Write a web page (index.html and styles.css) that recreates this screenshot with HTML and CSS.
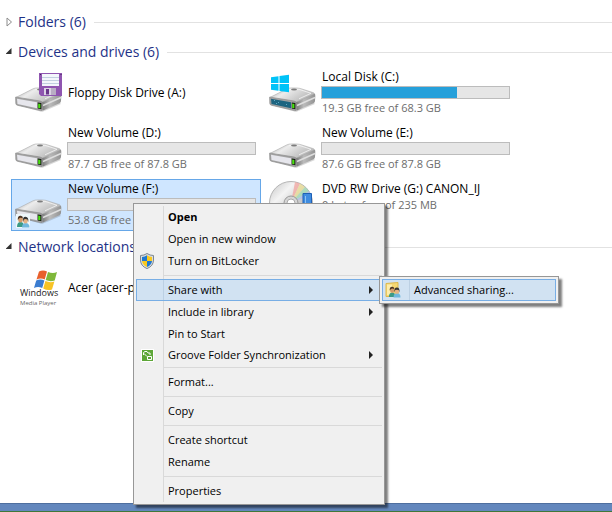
FILE: index.html
```html
<!DOCTYPE html>
<html lang="en">
<head>
  <meta charset="UTF-8">
  <meta name="viewport" content="width=device-width, initial-scale=1">
  <title>Computer</title>
  <link rel="stylesheet" href="styles.css">
</head>
<body>

<!-- shared icon shapes -->
<svg class="defs" aria-hidden="true">
  <defs>
    <linearGradient id="top" x1="0" y1="0" x2="1" y2="0.5">
      <stop offset="0" stop-color="#a2a2a2"/>
      <stop offset="0.4" stop-color="#ececec"/>
      <stop offset="0.65" stop-color="#d6d6d6"/>
      <stop offset="1" stop-color="#b8b8b8"/>
    </linearGradient>
    <linearGradient id="side" x1="0" y1="0" x2="1" y2="0">
      <stop offset="0" stop-color="#777"/>
      <stop offset="0.4" stop-color="#bbb"/>
      <stop offset="1" stop-color="#929292"/>
    </linearGradient>
    <linearGradient id="disc" x1="0" y1="0" x2="1" y2="1">
      <stop offset="0" stop-color="#c2c2c2"/>
      <stop offset="0.3" stop-color="#f4f4f4"/>
      <stop offset="0.6" stop-color="#c8c8c8"/>
      <stop offset="1" stop-color="#eee"/>
    </linearGradient>
    <symbol id="drive" viewBox="0 0 48 48">
      <path d="M2 36 L27 43 L46 35 L44 33 L4 34z" fill="#000" opacity="0.15"/>
      <path d="M27 32.500 L45.500 24.500 Q46.500 25 46.300 27 L46 32 Q46 33.500 44.500 34.200 L27.500 41.700z" fill="url(#side)"/>
      <path d="M28 36.500 L46 28.500" stroke="#dedede" stroke-width="1.500" fill="none"/>
      <path d="M0.800 28.500 L18 19.800 Q20 18.800 23 18.900 L28 19 Q30 19 33 20 L44.500 23.700 Q46 24.300 44.500 25.200 L29 32.400 Q27 33.200 25 32.900 L3 30z" fill="url(#top)" stroke="#a0a0a0" stroke-width="0.500"/>
      <path d="M20 20.500 L30 20.300 L42 24.300 L30 29.800" stroke="#f5f5f5" stroke-width="0.800" fill="none"/>
      <ellipse cx="25" cy="20.500" rx="3" ry="1" fill="#7c7c7c"/>
      <path d="M0.600 28.200 Q1.500 28 3 28.400 L25 32 Q27.500 32.500 27.500 34.500 L27.500 40 Q27.500 42 25.500 41.600 L2.500 36.300 Q1 36 0.800 34.500z" fill="#a2a2a2" stroke="#858585" stroke-width="0.600"/>
      <path class="panel" d="M2 29.700 L22 33.300 L22 39.300 L2.500 34.900z"/>
      <path d="M22.800 33.400 L26.400 34 L26.400 40.300 L22.800 39.500z" fill="#151515"/>
      <path d="M23.200 34.600 L25.400 35 L25.400 39.300 L23.200 38.900z" fill="#4ae010"/>
    </symbol>
    <symbol id="people" viewBox="0 0 14 14">
      <path d="M1 13 Q1 8 4.500 8 Q8 8 8 13z" fill="#3c9a86"/>
      <path d="M6 13.500 Q6 9 9.500 9 Q13.500 9 13.500 13.500z" fill="#6fb7dd"/>
      <ellipse cx="4.500" cy="5.500" rx="2.300" ry="3" fill="#d39c6b"/>
      <path d="M1.800 6 Q1.500 1.500 4.800 1.800 Q7 2 6.900 4.500 Q4.500 3.200 3 4.500z" fill="#4d3524"/>
      <ellipse cx="9.500" cy="6.500" rx="2.300" ry="3" fill="#e5b283"/>
      <path d="M7 8 Q6.300 2.800 9.500 2.800 Q13 3 12.200 8 L11.500 5.500 Q9.500 4.500 7.800 5.500z" fill="#333"/>
    </symbol>
  </defs>
</svg>

<main class="explorer">
  <section>
    <h2 class="group-title">
      <button class="toggle" aria-label="Expand folders">
        <svg width="7" height="10" viewBox="0 0 7 10"><path d="M1 1 L5.500 5 L1 9z" fill="#fff" stroke="#8c8c8c"/></svg>
      </button>
      <span>Folders (6)</span>
    </h2>
  </section>

  <section>
    <h2 class="group-title">
      <button class="toggle" aria-label="Collapse devices and drives">
        <svg width="7" height="10" viewBox="0 0 7 10"><path d="M5.500 1 L5.500 7 L-0.500 7z" fill="#333"/></svg>
      </button>
      <span>Devices and drives (6)</span>
    </h2>
    <div class="tiles">
      <a class="tile single" href="#a">
        <svg class="icon" viewBox="0 0 48 48">
          <use href="#drive"/>
          <path d="M24 4 H47 V27 H26 L24 25z" fill="#8f55b0"/>
          <path d="M27 5 H44 V17 H27z" fill="#f3f6fb"/>
          <path d="M27 8.500 H44 M27 11.500 H44 M27 14.500 H44" stroke="#c2cfe0"/>
          <path d="M29 19 H41 V26 H29z" fill="#dcd3e5"/>
          <path d="M31 20 H34 V25.500 H31z" fill="#69358a"/>
          <path d="M36 19 H41 V26 H36z" fill="#b9adc4"/>
          <path d="M25 5.500 H26 M45.500 5.500 H46.500" stroke="#42205b"/>
        </svg>
        <span class="info"><span class="name">Floppy Disk Drive (A:)</span></span>
      </a>

      <a class="tile" href="#c">
        <svg class="icon system" viewBox="0 0 48 48">
          <use href="#drive"/>
          <path d="M5 31.500 h1 M9 33.500 h1 M7 34.500 h1 M17 35.500 h1" stroke="#5fa9c4"/>
          <path d="M2 8.300 L9.500 7.300 V14 H2z M10.500 7.100 L20 5.700 V14 H10.500z M2 15 H9.500 V21.700 L2 20.700z M10.500 15 H20 V23.200 L10.500 21.900z" fill="#00c3f8"/>
        </svg>
        <span class="info">
          <span class="name">Local Disk (C:)</span>
          <span class="bar"><span class="used" style="width: 72%"></span></span>
          <span class="free">19.3 GB free of 68.3 GB</span>
        </span>
      </a>

      <a class="tile" href="#d">
        <svg class="icon" viewBox="0 0 48 48"><use href="#drive"/></svg>
        <span class="info">
          <span class="name">New Volume (D:)</span>
          <span class="bar"></span>
          <span class="free">87.7 GB free of 87.8 GB</span>
        </span>
      </a>

      <a class="tile" href="#e">
        <svg class="icon" viewBox="0 0 48 48"><use href="#drive"/></svg>
        <span class="info">
          <span class="name">New Volume (E:)</span>
          <span class="bar"></span>
          <span class="free">87.6 GB free of 87.8 GB</span>
        </span>
      </a>

      <a class="tile selected" href="#f">
        <svg class="icon" viewBox="0 0 48 48">
          <use href="#drive"/>
          <path d="M1 33 H15 V47 H1z" fill="#eef7fb"/>
          <use href="#people" x="1" y="33" width="14" height="14"/>
        </svg>
        <span class="info">
          <span class="name">New Volume (F:)</span>
          <span class="bar"></span>
          <span class="free">53.8 GB free</span>
        </span>
      </a>

      <a class="tile" href="#g">
        <svg class="icon" viewBox="0 0 48 48">
          <circle cx="22" cy="22" r="21.500" fill="url(#disc)" stroke="#b5b5b5"/>
          <path d="M22 22 L26 1 L31 2.500z" fill="#f2a09a" opacity="0.700"/>
          <path d="M22 22 L31 2.500 L36 6z" fill="#eadb8c" opacity="0.700"/>
          <path d="M22 22 L36 6 L40 10z" fill="#9bdcb2" opacity="0.700"/>
          <path d="M22 22 L40 10 L42 14z" fill="#a9bdf0" opacity="0.700"/>
          <circle cx="22" cy="22" r="7" fill="#d5d5d5" stroke="#999"/>
          <circle cx="22" cy="22" r="4" fill="#fff" stroke="#aaa"/>
          <path d="M34 12.500 H42.500 V36 H34z" fill="#3f8ce0" stroke="#1f5fb5"/>
          <path d="M36.500 15 V34" stroke="#8cc2f5"/>
        </svg>
        <span class="info">
          <span class="name">DVD RW Drive (G:) CANON_IJ</span>
          <span class="free">0 bytes free of 235 MB</span>
        </span>
      </a>
    </div>
  </section>

  <section>
    <h2 class="group-title">
      <button class="toggle" aria-label="Collapse network locations">
        <svg width="7" height="10" viewBox="0 0 7 10"><path d="M5.500 1 L5.500 7 L-0.500 7z" fill="#333"/></svg>
      </button>
      <span>Network locations (1)</span>
    </h2>
    <div class="tiles">
      <a class="tile single" href="#acer">
        <svg class="icon" viewBox="0 0 48 48">
          <path d="M24 7.500 Q28 5.500 32 7.500 L29.700 15.500 Q26 13.500 21.500 15.500z" fill="#e8602c"/>
          <path d="M33 8 Q38 10 42 8 L39.700 16.500 Q35 18 30.700 16z" fill="#7fb83a"/>
          <path d="M21.200 16.500 Q25.500 14.500 29.400 16.500 L27.200 24 Q23 22 19 24z" fill="#3b7dd0"/>
          <path d="M30.400 17 Q35 19 39.400 17.500 L37 25.500 Q32.500 27 28.200 24.500z" fill="#f7c325"/>
          <text class="wmp-name" x="5" y="32">Windows</text>
          <text class="wmp-sub" x="5" y="41">Media Player</text>
        </svg>
        <span class="info"><span class="name">Acer (acer-pc)</span></span>
      </a>
    </div>
  </section>
</main>

<footer class="window-edge"></footer>

<ul class="menu context-menu">
  <li><button class="default">Open</button></li>
  <li><button>Open in new window</button></li>
  <li>
    <button>
      <svg class="menu-icon" viewBox="0 0 16 16">
        <path d="M8 0.500 Q11 2.500 14.500 2.500 V7 Q14.500 13 8 15.600 Q1.500 13 1.500 7 V2.500 Q5 2.500 8 0.500z" fill="#d9dcdf" stroke="#7d8790"/>
        <path d="M8 2.300 V8 H3 V4 Q6 3.800 8 2.300z" fill="#1f78d0"/>
        <path d="M8 2.300 Q10 3.800 13 4 V8 H8z" fill="#fbc91c"/>
        <path d="M3 8 H8 V14 Q3.500 12 3 8z" fill="#fbc91c"/>
        <path d="M8 8 H13 Q12.500 12 8 14z" fill="#1f78d0"/>
      </svg>
      Turn on BitLocker
    </button>
  </li>
  <li class="separator"></li>
  <li>
    <button class="active has-arrow">Share with</button>
    <ul class="menu submenu">
      <li>
        <button class="active">
          <svg class="menu-icon" viewBox="0 0 16 16">
            <path d="M1 1.500 L13 0.500 V14.500 H1z" fill="#f6d873" stroke="#dcb84e"/>
            <path d="M2 2.500 H7 V13 H2z" fill="#fdedab"/>
            <use href="#people" x="3" y="3" width="13" height="13"/>
          </svg>
          Advanced sharing...
        </button>
      </li>
    </ul>
  </li>
  <li><button class="has-arrow">Include in library</button></li>
  <li><button>Pin to Start</button></li>
  <li class="compact">
    <button class="has-arrow">
      <svg class="menu-icon" viewBox="0 0 16 16">
        <path d="M2 2 H15 V15 H2z" fill="#fff"/>
        <path d="M3 3 H14 V14 H3z" fill="#5da637"/>
        <path d="M4.500 8 V5.500 L6 4.500 H8 L9 6 H11 V8 M5 6.500 L8 9.500 M8.500 9.500 H12.500 V12.500 H8.500z" fill="none" stroke="#fff"/>
      </svg>
      Groove Folder Synchronization
    </button>
  </li>
  <li class="separator"></li>
  <li><button>Format...</button></li>
  <li class="separator"></li>
  <li><button>Copy</button></li>
  <li class="separator"></li>
  <li><button>Create shortcut</button></li>
  <li><button>Rename</button></li>
  <li class="separator"></li>
  <li><button>Properties</button></li>
</ul>

</body>
</html>
```
FILE: styles.css
```css
* {
  box-sizing: border-box;
}

body {
  margin: 0;
  min-height: 100vh;
  display: flex;
  flex-direction: column;
  position: relative;
  background: #fff;
  color: #000;
  font-family: "Open Sans", "Noto Sans", sans-serif;
  font-size: 12px;
  line-height: 16px;
}

button {
  font: inherit;
  color: inherit;
  border: none;
  background: none;
  padding: 0;
}

.defs {
  position: absolute;
  width: 0;
  height: 0;
}

.explorer {
  flex: 1;
  padding-top: 7px;
}

/* group headings */

.group-title {
  display: flex;
  align-items: center;
  height: 30px;
  margin: 0;
  padding-left: 6px;
  color: #1e3287;
  font-size: 14px;
  font-weight: normal;
}

.group-title::after {
  content: "";
  flex: 1;
  height: 1px;
  margin-left: 8px;
  background: #e2e2e2;
}

.toggle {
  display: flex;
  width: 12px;
}

/* drive tiles */

.tiles {
  display: grid;
  grid-template-columns: repeat(auto-fill, 250px);
  grid-auto-rows: 52px;
  gap: 4px;
  padding-left: 11px;
  margin-bottom: 1px;
}

.tile {
  display: flex;
  padding: 1px 4px 1px 3px;
  border: 1px solid transparent;
  color: #000;
  text-decoration: none;
}

.tile.selected {
  background: #cfe6ff;
  border-color: #66a7e8;
}

.tile.single {
  align-items: center;
}

.icon {
  flex: none;
  width: 48px;
  height: 48px;
  margin-right: 4px;
}

.info {
  flex: 1;
  display: flex;
  flex-direction: column;
  white-space: nowrap;
}

.name,
.free {
  padding-left: 1px;
}

.free {
  color: #6d6d6d;
  font-size: 11px;
}

.bar {
  height: 13px;
  margin: 1px 0;
  border: 1px solid #bcbcbc;
  background: #e6e6e6;
}

.used {
  display: block;
  height: 100%;
  background: #26a0da;
}

.panel {
  fill: var(--panel, #e6e6ec);
}

.system {
  --panel: #1d6480;
}

.wmp-name {
  font-size: 9px;
  fill: #222;
}

.wmp-sub {
  font-size: 6px;
  fill: #666;
}

.window-edge {
  height: 9px;
  border-top: 1px solid #4f6f9f;
  border-bottom: 1px solid #40783a;
  background: #6387bd;
}

/* menus */

.menu {
  position: absolute;
  margin: 0;
  padding: 2px;
  list-style: none;
  border: 1px solid #979797;
  background: linear-gradient(#d9d9d9, #d9d9d9) 29px 2px / 1px calc(100% - 4px) no-repeat #f0f0f0;
  box-shadow: 3px 3px 2px rgba(0, 0, 0, 0.5);
  font-size: 11px;
}

.context-menu {
  left: 133px;
  top: 203px;
  width: 252px;
}

.submenu {
  left: 245px;
  top: 72px;
  width: 180px;
}

.menu button {
  display: flex;
  align-items: center;
  position: relative;
  width: 100%;
  height: 22px;
  padding-left: 31px;
  border: 1px solid transparent;
  text-align: left;
  white-space: nowrap;
}

.menu .compact button {
  height: 19px;
}

.menu .default {
  font-weight: bold;
}

.menu .active {
  border-color: #78aee5;
  background: linear-gradient(#bcd0e3, #bcd0e3) 26px 0 / 1px 100% no-repeat #d1e2f2;
}

.menu-icon {
  position: absolute;
  left: 2px;
  width: 16px;
  height: 16px;
}

.has-arrow::after {
  content: "";
  margin-left: auto;
  margin-right: 8px;
  border: 4px solid transparent;
  border-left-color: #222;
  border-right: none;
}

.separator {
  height: 7px;
  margin-left: 28px;
  padding: 3px 0;
  background: #d9d9d9 content-box;
}
```
